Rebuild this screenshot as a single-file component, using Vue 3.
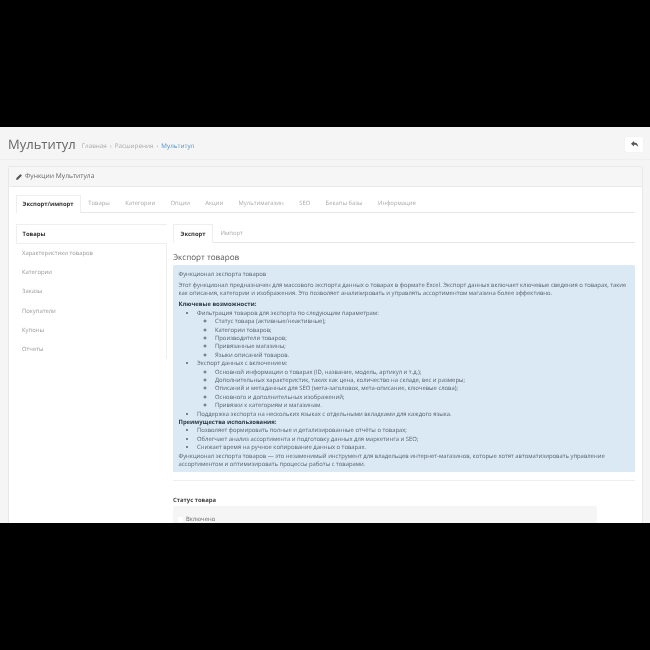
<script setup>
const mainTabs = ['Товары', 'Категории', 'Опции', 'Акции', 'Мультимагазин', 'SEO', 'Бекапы базы', 'Информация']
const sideItems = ['Характеристики товаров', 'Категории', 'Заказы', 'Покупатели', 'Купоны', 'Отчеты']
</script>

<template>
  <div class="frame">
    <div class="bar-top"></div>
    <main class="page">
      <header class="page-header">
        <h1>Мультитул</h1>
        <nav class="crumbs">
          <span>Главная</span><i>›</i><span>Расширения</span><i>›</i><a>Мультитул</a>
        </nav>
        <button class="back" aria-label="Назад">
          <svg width="7" height="6" viewBox="0 0 14 12"><path d="M6 0v3c4 0 8 1.500 8 9-1.500-3.500-4-4.500-8-4.500V11L0 5.500z" fill="#555"/></svg>
        </button>
      </header>
      <section class="panel">
        <div class="panel-head">
          <svg width="6" height="6" viewBox="0 0 12 12"><path d="M0 12l1-4 7-7a1.400 1.400 0 0 1 2 0l1 1a1.400 1.400 0 0 1 0 2l-7 7z" fill="#555"/></svg>
          <span>Функции Мультитула</span>
        </div>
        <div class="panel-body">
          <div class="tabs main-tabs">
            <a class="tab active">Экспорт/импорт</a>
            <a v-for="t in mainTabs" :key="t" class="tab">{{ t }}</a>
          </div>
          <div class="columns">
            <aside class="side">
              <div class="side-active">Товары</div>
              <ul>
                <li v-for="s in sideItems" :key="s">{{ s }}</li>
              </ul>
            </aside>
            <div class="content">
              <div class="tabs sub-tabs">
                <a class="tab active">Экспорт</a>
                <a class="tab">Импорт</a>
              </div>
              <h2>Экспорт товаров</h2>
              <div class="alert">
                <p class="alert-title">Функционал экспорта товаров</p>
                <p class="lead">Этот функционал предназначен для массового экспорта данных о товарах в формате Excel. Экспорт данных включает ключевые сведения о товарах, такие как описания, категории и изображения. Это позволяет анализировать и управлять ассортиментом магазина более эффективно.</p>
                <strong>Ключевые возможности:</strong>
                <ul>
                  <li>Фильтрация товаров для экспорта по следующим параметрам:
                    <ul>
                      <li>Статус товара (активные/неактивные);</li>
                      <li>Категории товаров;</li>
                      <li>Производители товаров;</li>
                      <li>Привязанные магазины;</li>
                      <li>Языки описаний товаров.</li>
                    </ul>
                  </li>
                  <li>Экспорт данных с включением:
                    <ul>
                      <li>Основной информации о товарах (ID, название, модель, артикул и т.д.);</li>
                      <li>Дополнительных характеристик, таких как цена, количество на складе, вес и размеры;</li>
                      <li>Описаний и метаданных для SEO (мета-заголовок, мета-описание, ключевые слова);</li>
                      <li>Основного и дополнительных изображений;</li>
                      <li>Привязки к категориям и магазинам.</li>
                    </ul>
                  </li>
                  <li>Поддержка экспорта на нескольких языках с отдельными вкладками для каждого языка.</li>
                </ul>
                <strong>Преимущества использования:</strong>
                <ul>
                  <li>Позволяет формировать полные и детализированные отчёты о товарах;</li>
                  <li>Облегчает анализ ассортимента и подготовку данных для маркетинга и SEO;</li>
                  <li>Снижает время на ручное копирование данных о товарах.</li>
                </ul>
                <p>Функционал экспорта товаров — это незаменимый инструмент для владельцев интернет-магазинов, которые хотят автоматизировать управление ассортиментом и оптимизировать процессы работы с товарами.</p>
              </div>
              <div class="divider"></div>
              <label class="field-label">Статус товара</label>
              <div class="checks">
                <div class="check"><span class="box"></span>Включено</div>
              </div>
            </div>
          </div>
        </div>
      </section>
    </main>
    <div class="bar-bottom"></div>
  </div>
</template>

<style>
html, body { margin: 0; background: #000; }
</style>

<style scoped>
.frame { width: 650px; height: 650px; overflow: hidden; background: #000; font-family: "Open Sans", "Noto Sans", sans-serif; font-size: 5.880px; line-height: 8.400px; color: #666; text-rendering: geometricPrecision; }
.bar-top { height: 127px; }
.bar-bottom { height: 127px; }
.page { height: 396px; overflow: hidden; background: #f5f5f5; filter: blur(0.3px); }
.page-header { height: 24px; padding: 5px 7px 3px 8px; display: flex; align-items: center; border-bottom: 1px solid #eee; }
h1 { margin: 0 6px 0 0; font-size: 13px; line-height: 20px; font-weight: 400; color: #666; }
.crumbs { display: flex; align-items: center; gap: 3px; margin-top: 5px; color: #aaa; font-size: 6.300px; }
.crumbs i { font-style: normal; color: #bbb; }
.crumbs a { color: #4b92d0; }
.back { margin-left: auto; width: 18px; height: 15px; padding: 0; border: 0; border-radius: 1.500px; background: #fff; box-shadow: 0 0 1px #ddd; display: flex; align-items: center; justify-content: center; }
.panel { margin: 6px 7px 0 7.500px; border: 1px solid #e8e8e8; border-radius: 1.500px; background: #fff; }
.panel-head { height: 19px; display: flex; align-items: center; gap: 3.500px; padding-left: 7px; background: #f6f6f6; border-bottom: 1px solid #e8e8e8; color: #666; font-size: 6.700px; }
.panel-body { padding: 6.500px 7px 0; }
.tabs { display: flex; border-bottom: 1px solid #e6e6e6; }
.tab { display: flex; align-items: center; color: #aaa; white-space: nowrap; }
.tab.active { background: #fff; color: #333; font-weight: 700; border: 1px solid #eee; border-bottom: 0; margin-bottom: -1px; }
.main-tabs { padding-top: 1px; height: 17.500px; }
.main-tabs .tab { padding: 0 7.700px; }
.main-tabs .tab.active { padding: 0 6px; }
.columns { display: flex; margin-top: 11px; }
.side { width: 151px; flex: none; }
.side-active { height: 19.500px; line-height: 19.500px; padding-left: 6px; font-weight: 700; color: #333; border: 1px solid #eee; border-right: 0; box-sizing: border-box; }
.side ul { list-style: none; margin: 0; padding: 0.500px 0 0 6.500px; border-right: 1px solid #eee; height: 115px; }
.side li { height: 19.200px; line-height: 19.200px; color: #999; }
.content { margin-left: 6.500px; flex: 1; min-width: 0; }
.sub-tabs { height: 17.500px; padding-bottom: 0.500px; }
.sub-tabs .tab { padding: 0 7.500px; }
.sub-tabs .tab.active { padding: 0 6.500px; }
h2 { margin: 9px 0 1.500px; font-size: 8.100px; line-height: 11px; font-weight: 400; color: #555; }
.alert { height: 207.500px; box-sizing: border-box; padding: 5px 5.500px; background: #dbe9f4; border-radius: 1.500px; color: #55626e; }
.alert p { margin: 0; }
.alert .alert-title { margin-bottom: 3px; }
.alert .lead { margin-bottom: 2.600px; }
.alert strong { display: block; color: #2c3a46; }
.alert ul { margin: 0; padding-left: 18.500px; }
.alert ul ul { list-style: circle; padding-left: 18px; }
.divider { margin-top: 8px; border-top: 1px solid #eee; }
.field-label { display: block; margin-top: 15px; font-weight: 700; color: #444; }
.checks { margin-top: 2px; width: 423.500px; height: 60px; padding: 9px 5px; box-sizing: border-box; background: #f5f5f5; border-radius: 1.500px; }
.check { display: flex; align-items: center; gap: 3px; color: #666; }
.box { width: 5px; height: 5px; background: #fff; }
</style>
